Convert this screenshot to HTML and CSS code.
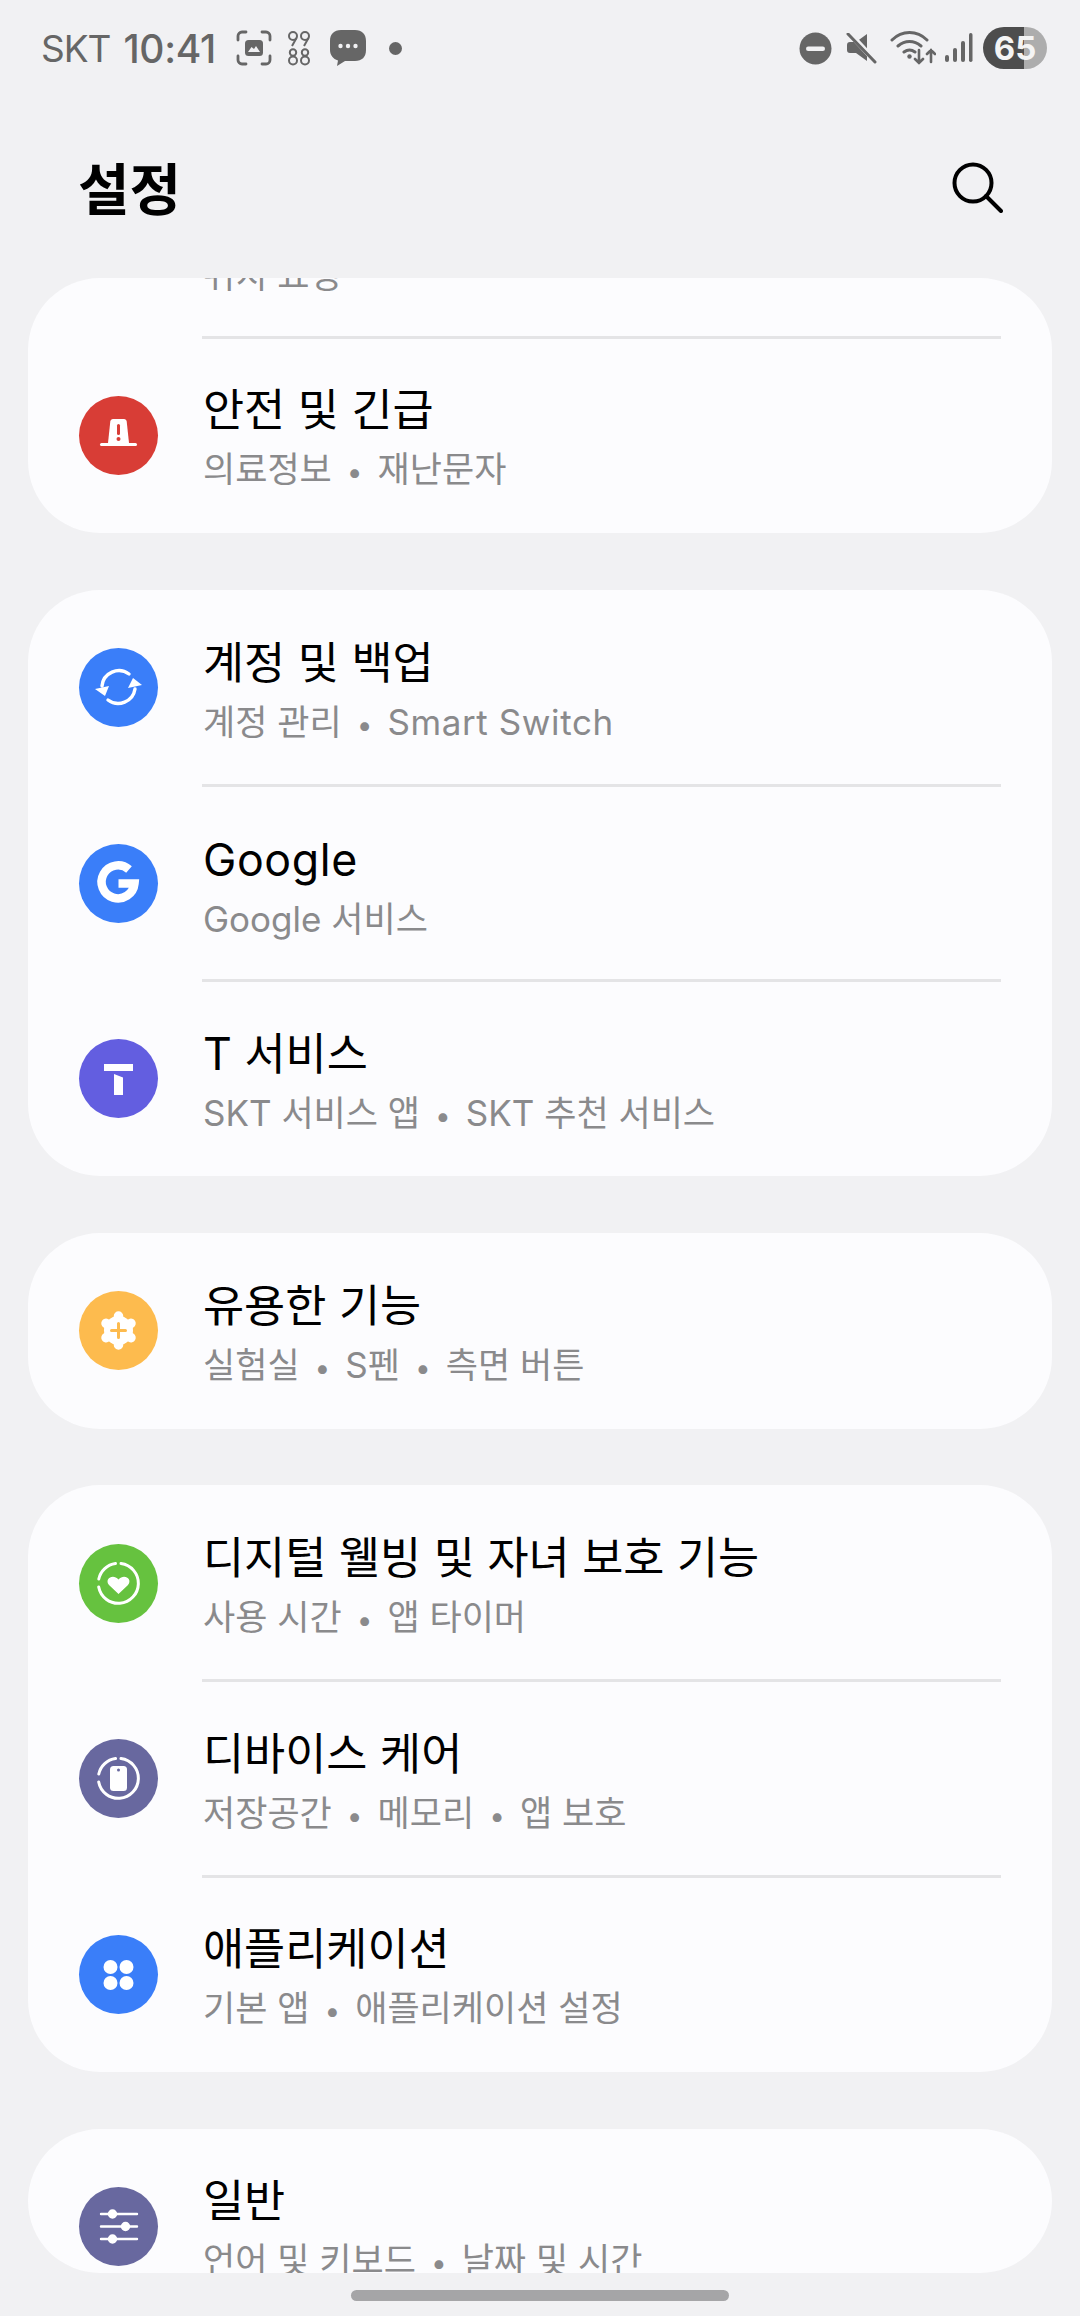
FILE: index.html
```html
<!DOCTYPE html>
<html lang="ko">

<head>
    <meta charset="UTF-8">
    <meta name="viewport" content="width=device-width, initial-scale=1.0">
    <title>설정</title>
    <link rel="stylesheet" href="styles.css">
</head>

<body>
    <div class="statusbar">
        <div class="status-left">
            <span class="carrier">SKT</span>
            <span class="clock">10:41</span>
            <svg class="ic-shot" width="36" height="36" viewBox="0 0 36 36" fill="none" stroke="#666" stroke-width="2.800" stroke-linecap="round">
                <path d="M2 10V6a4 4 0 0 1 4-4h4M26 2h4a4 4 0 0 1 4 4v4M34 26v4a4 4 0 0 1-4 4h-4M10 34H6a4 4 0 0 1-4-4v-4" />
                <rect x="9" y="10" width="18" height="16" rx="3.500" fill="#666" stroke="none" />
                <path d="M12 22l3.500-5 2.500 2 2-3 4 6z" fill="#f1f1f3" stroke="none" />
            </svg>
            <svg class="ic-nums" width="24" height="36" viewBox="0 0 24 36" fill="none" stroke="#666" stroke-width="2">
                <circle cx="6" cy="6" r="4" />
                <circle cx="18" cy="6" r="4" />
                <path d="M9.500 8L5 16M21.500 8L17 16" />
                <circle cx="6" cy="22.500" r="3.200" />
                <circle cx="18" cy="22.500" r="3.200" />
                <circle cx="6" cy="30.500" r="4" />
                <circle cx="18" cy="30.500" r="4" />
            </svg>
            <svg class="ic-chat" width="36" height="37" viewBox="0 0 36 37">
                <path d="M11 0h14c7 0 11 4 11 11v9c0 7-4 11-11 11H15l-8 5 1-5.500C3 29 0 25 0 20v-9C0 4 4 0 11 0z" fill="#666" />
                <circle cx="10.500" cy="16" r="2.200" fill="#f1f1f3" />
                <circle cx="18" cy="16" r="2.200" fill="#f1f1f3" />
                <circle cx="25.500" cy="16" r="2.200" fill="#f1f1f3" />
            </svg>
            <span class="dot"></span>
        </div>
        <div class="status-right">
            <svg class="ic-dnd" width="33" height="33" viewBox="0 0 33 33">
                <circle cx="16.500" cy="16.500" r="16" fill="#666" />
                <rect x="7" y="14.500" width="19" height="4.500" rx="2.200" fill="#f1f1f3" />
            </svg>
            <svg class="ic-mute" width="31" height="31" viewBox="0 0 31 31">
                <path d="M21 1v27L10 20H4a3 3 0 0 1-3-3v-5a3 3 0 0 1 3-3h6z" fill="#666" />
                <path d="M4 1l26 28" stroke="#f1f1f3" stroke-width="5.500" />
                <path d="M2 1l27 28" stroke="#666" stroke-width="3" stroke-linecap="round" />
            </svg>
            <svg class="ic-wifi" width="46" height="34" viewBox="0 0 46 34" fill="none" stroke="#666" stroke-width="3" stroke-linecap="round">
                <path d="M2 9C12-1 27-1 37 9M8 15c7-6 16-6 23 0M14 21c4-3 7-3 11 0" />
                <circle cx="19.500" cy="25.500" r="2.200" fill="#666" stroke="none" />
                <path d="M29 19v13M25 28l4 4 4-4M41 31V19M37 23l4-4 4 4" stroke-width="2.600" />
            </svg>
            <svg class="ic-signal" width="28" height="30" viewBox="0 0 28 30" fill="#666">
                <rect x="0" y="22" width="4" height="7" rx="2" />
                <rect x="8" y="15" width="4" height="14" rx="2" />
                <rect x="16" y="8" width="4" height="21" rx="2" />
                <rect x="24" y="0" width="3.500" height="29" rx="1.700" />
            </svg>
            <div class="battery"><span>65</span></div>
        </div>
    </div>

    <div class="header">
        <h1>설정</h1>
        <svg class="ic-search" width="52" height="52" viewBox="0 0 52 52" fill="none" stroke="#000" stroke-width="4" stroke-linecap="round">
            <circle cx="22" cy="22" r="18.500" />
            <path d="M35 35l15 15" />
        </svg>
    </div>

    <div class="list">
        <div class="card">
            <div class="row row-cut">
                <div class="row-text">
                    <div class="title">위치</div>
                    <div class="sub">위치 요청</div>
                </div>
            </div>
            <div class="divider"></div>
            <div class="row">
                <div class="circle red">
                    <svg width="79" height="79" viewBox="0 0 79 79">
                        <path d="M34 23h11c1.500 0 2.500 1 2.700 2.500L50 47H29l2.300-21.500C31.500 24 32.500 23 34 23z" fill="#fff" />
                        <rect x="21" y="47" width="37" height="3" rx="1.500" fill="#fff" />
                        <rect x="38" y="28" width="3" height="11" rx="1.500" fill="#d83d36" />
                        <circle cx="39.500" cy="43" r="2" fill="#d83d36" />
                    </svg>
                </div>
                <div class="row-text">
                    <div class="title">안전 및 긴급</div>
                    <div class="sub">의료정보<i>•</i>재난문자</div>
                </div>
            </div>
        </div>

        <div class="card">
            <div class="row">
                <div class="circle blue">
                    <svg width="79" height="79" viewBox="0 0 79 79" fill="none" stroke="#fff" stroke-width="3.400" stroke-linecap="round">
                        <path d="M23 38A17 17 0 0 1 50 26" />
                        <path d="M56 41A17 17 0 0 1 29 52" />
                        <path d="M16 41l14-3-4 10z" fill="#fff" stroke="none" />
                        <path d="M63 37l-14 3 5-10z" fill="#fff" stroke="none" />
                    </svg>
                </div>
                <div class="row-text">
                    <div class="title">계정 및 백업</div>
                    <div class="sub">계정 관리<i>•</i><span class="latin">Smart Switch</span></div>
                </div>
            </div>
            <div class="divider"></div>
            <div class="row">
                <div class="circle blue">
                    <svg width="79" height="79" viewBox="0 0 79 79" fill="none" stroke="#fff" stroke-width="8.500">
                        <path d="M50 25.500A16.500 16.500 0 1 0 55.500 39.500H39.500" />
                    </svg>
                </div>
                <div class="row-text">
                    <div class="title latin">Google</div>
                    <div class="sub">Google 서비스</div>
                </div>
            </div>
            <div class="divider"></div>
            <div class="row">
                <div class="circle violet">
                    <svg width="79" height="79" viewBox="0 0 79 79" fill="#fff">
                        <rect x="25" y="25" width="29" height="7" />
                        <path d="M35 35l9 3.500V56h-9z" />
                    </svg>
                </div>
                <div class="row-text">
                    <div class="title">T 서비스</div>
                    <div class="sub">SKT 서비스 앱<i>•</i>SKT 추천 서비스</div>
                </div>
            </div>
        </div>

        <div class="card">
            <div class="row">
                <div class="circle orange">
                    <svg width="79" height="79" viewBox="0 0 79 79">
                        <circle cx="39.500" cy="39.500" r="14.500" fill="#fff" />
                        <path d="M39.500 39.500V25M39.500 39.500V54M39.500 39.500L27 32.300M39.500 39.500L52 32.300M39.500 39.500L27 46.700M39.500 39.500L52 46.700" stroke="#fff" stroke-width="9.500" stroke-linecap="round" />
                        <path d="M39.500 32.500v14M32.500 39.500h14" stroke="#fdbb4e" stroke-width="3" stroke-linecap="round" />
                    </svg>
                </div>
                <div class="row-text">
                    <div class="title">유용한 기능</div>
                    <div class="sub">실험실<i>•</i>S펜<i>•</i>측면 버튼</div>
                </div>
            </div>
        </div>

        <div class="card">
            <div class="row">
                <div class="circle green">
                    <svg width="79" height="79" viewBox="0 0 79 79">
                        <path d="M42 19.500A20 20 0 1 1 19.700 43M19.800 35A20 20 0 0 1 36.500 19.500" fill="none" stroke="#fff" stroke-width="3" stroke-linecap="round" />
                        <path d="M39.500 50l-9.500-9c-5-6 4-12 9.500-5.500 5.500-6.500 14.500-.5 9.500 5.500z" fill="#fff" />
                    </svg>
                </div>
                <div class="row-text">
                    <div class="title">디지털 웰빙 및 자녀 보호 기능</div>
                    <div class="sub">사용 시간<i>•</i>앱 타이머</div>
                </div>
            </div>
            <div class="divider"></div>
            <div class="row">
                <div class="circle slate">
                    <svg width="79" height="79" viewBox="0 0 79 79">
                        <path d="M42 19.500A20 20 0 1 1 19.700 43M19.800 35A20 20 0 0 1 36.500 19.500" fill="none" stroke="#fff" stroke-width="3" stroke-linecap="round" />
                        <rect x="31" y="27" width="17" height="25" rx="3.500" fill="#fff" />
                        <circle cx="39.500" cy="31" r="1.500" fill="#68689f" />
                    </svg>
                </div>
                <div class="row-text">
                    <div class="title">디바이스 케어</div>
                    <div class="sub">저장공간<i>•</i>메모리<i>•</i>앱 보호</div>
                </div>
            </div>
            <div class="divider"></div>
            <div class="row">
                <div class="circle blue">
                    <svg width="79" height="79" viewBox="0 0 79 79" fill="#fff">
                        <circle cx="31.500" cy="32" r="7" />
                        <circle cx="47.500" cy="32" r="7" />
                        <circle cx="31.500" cy="48" r="7" />
                        <circle cx="47.500" cy="48" r="7" />
                    </svg>
                </div>
                <div class="row-text">
                    <div class="title">애플리케이션</div>
                    <div class="sub">기본 앱<i>•</i>애플리케이션 설정</div>
                </div>
            </div>
        </div>

        <div class="card">
            <div class="row">
                <div class="circle slate">
                    <svg width="79" height="79" viewBox="0 0 79 79" fill="#fff" stroke="#fff" stroke-width="2.400" stroke-linecap="round">
                        <path d="M22 27h36M22 39.500h36M22 52h36" />
                        <circle cx="33.500" cy="27" r="3.500" />
                        <circle cx="46.500" cy="39.500" r="3.500" />
                        <circle cx="33.500" cy="52" r="3.500" />
                    </svg>
                </div>
                <div class="row-text">
                    <div class="title">일반</div>
                    <div class="sub">언어 및 키보드<i>•</i>날짜 및 시간</div>
                </div>
            </div>
        </div>
    </div>

    <div class="navbar">
        <div class="home-pill"></div>
    </div>
</body>

</html>
```

FILE: styles.css
```css
* {
    margin: 0;
    padding: 0;
    box-sizing: border-box;
}

body {
    width: 1080px;
    height: 2316px;
    overflow: hidden;
    display: flex;
    flex-direction: column;
    background-color: #f1f1f3;
    font-family: "Inter", "Noto Sans CJK KR", sans-serif;
}

.statusbar {
    height: 96px;
    flex-shrink: 0;
    display: flex;
    justify-content: space-between;
    align-items: center;
    padding: 0 33px 0 41px;
    color: #666;
}

.status-left,
.status-right {
    display: flex;
    align-items: center;
}

.carrier {
    font-size: 37px;
    letter-spacing: -1px;
}

.clock {
    font-size: 39px;
    font-weight: 500;
    margin-left: 13px;
    letter-spacing: -0.3px;
}

.ic-shot {
    margin-left: 20px;
}

.ic-nums {
    margin-left: 15px;
}

.ic-chat {
    margin-left: 19px;
}

.dot {
    width: 13px;
    height: 13px;
    margin-left: 23px;
    border-radius: 50%;
    background-color: #666;
}

.ic-mute {
    margin-left: 14px;
}

.ic-wifi {
    margin-left: 13px;
}

.ic-signal {
    margin-left: 9px;
}

.battery {
    width: 64px;
    height: 42px;
    margin-left: 10px;
    border-radius: 21px;
    background: linear-gradient(to right, #4d4d4d 41px, #adadad 41px);
    display: flex;
    align-items: center;
    justify-content: center;
    color: #f4f4f4;
    font-size: 33px;
    font-weight: 700;
}

.header {
    height: 182px;
    flex-shrink: 0;
    display: flex;
    justify-content: space-between;
    align-items: flex-start;
    padding: 62px 77px 0 78px;
}

.header h1 {
    font-size: 56px;
    line-height: 64px;
    font-weight: 700;
    color: #000;
}

.ic-search {
    margin-top: 3px;
}

.list {
    flex: 1;
    margin: 0 28px;
    overflow: hidden;
    border-radius: 0 0 72px 72px;
    display: flex;
    flex-direction: column;
    gap: 56.8px;
}

.card {
    flex-shrink: 0;
    background-color: #fcfcfe;
    border-radius: 72px;
    overflow: hidden;
}

.row {
    height: 195.5px;
    display: flex;
    align-items: center;
    padding-left: 51px;
}

.row-cut {
    margin-top: -136px;
    padding-left: 175px;
}

.row-text {
    margin-left: 45px;
    padding-top: 12px;
}

.row-cut .row-text {
    margin-left: 0;
}

.title {
    font-size: 44.7px;
    line-height: 60px;
    color: #000;
}

.sub {
    font-size: 35px;
    line-height: 59px;
    color: #8a8a8c;
}

.latin {
    letter-spacing: 0.6px;
}

.sub i {
    font-style: normal;
    margin: 0 15px;
    font-size: 28px;
}

.divider {
    height: 3px;
    margin: -1.5px 51px -1.5px 174px;
    background-color: #e4e4e6;
}

.circle {
    width: 79px;
    height: 79px;
    flex-shrink: 0;
    border-radius: 50%;
}

.circle svg {
    display: block;
}

.red {
    background-color: #d83d36;
}

.blue {
    background-color: #3a7ef9;
}

.violet {
    background-color: #635ee0;
}

.orange {
    background-color: #fdbb4e;
}

.green {
    background-color: #66c23f;
}

.slate {
    background-color: #68689f;
}

.navbar {
    height: 43px;
    flex-shrink: 0;
    display: flex;
    justify-content: center;
    padding-top: 17px;
}

.home-pill {
    width: 378px;
    height: 11px;
    border-radius: 6px;
    background-color: #a5a5a7;
}
```
